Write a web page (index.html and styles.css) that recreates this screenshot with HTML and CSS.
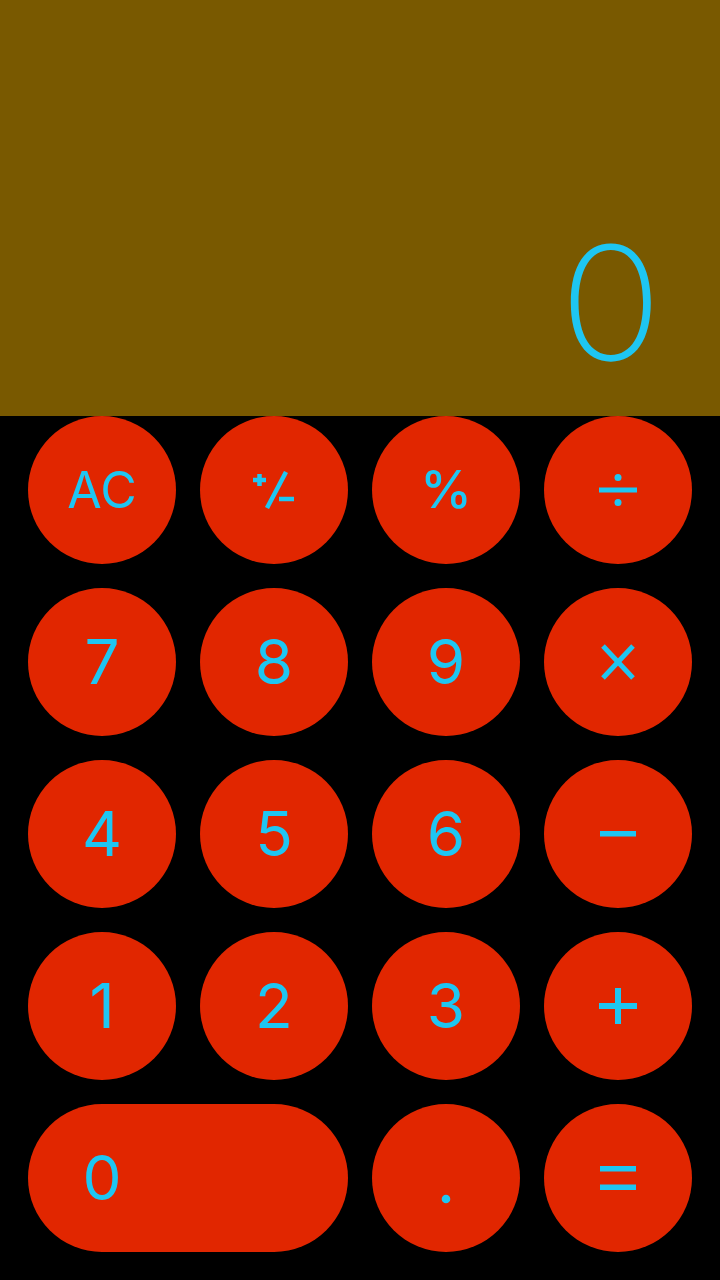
FILE: index.html
```html
<!DOCTYPE html>
<html lang="en">
<head>
<meta charset="utf-8">
<title>Calculator</title>
<link rel="stylesheet" href="styles.css">
</head>
<body>
<div class="calc">
  <div class="display"><span class="value">0</span></div>
  <div class="keypad">
    <button class="key"><span class="txt small">AC</span></button>
    <button class="key" aria-label="plus/minus">
      <svg width="42" height="38" viewBox="0 0 42 38"><g stroke="currentColor" stroke-width="4.5" fill="none" stroke-linecap="butt"><line x1="0" y1="9" x2="13" y2="9"/><line x1="6.5" y1="3" x2="6.5" y2="15"/><line x1="33" y1="1" x2="14" y2="37"/><line x1="26" y1="28" x2="41" y2="28"/></g></svg>
    </button>
    <button class="key"><span class="txt pct">%</span></button>
    <button class="key" aria-label="divide">
      <svg width="38" height="32" viewBox="0 0 38 32"><g fill="currentColor"><rect x="0" y="13.5" width="38" height="5"/><circle cx="19" cy="3.5" r="3.5"/><circle cx="19" cy="28.5" r="3.5"/></g></svg>
    </button>

    <button class="key"><span class="txt">7</span></button>
    <button class="key"><span class="txt">8</span></button>
    <button class="key"><span class="txt">9</span></button>
    <button class="key" aria-label="multiply">
      <svg width="34" height="36" viewBox="0 0 34 36"><g stroke="currentColor" stroke-width="5" stroke-linecap="butt"><line x1="2" y1="2" x2="32" y2="34"/><line x1="32" y1="2" x2="2" y2="34"/></g></svg>
    </button>

    <button class="key"><span class="txt">4</span></button>
    <button class="key"><span class="txt">5</span></button>
    <button class="key"><span class="txt">6</span></button>
    <button class="key" aria-label="minus">
      <svg width="36" height="6" viewBox="0 0 36 6"><rect x="0" y="0" width="36" height="5.5" fill="currentColor"/></svg>
    </button>

    <button class="key"><span class="txt">1</span></button>
    <button class="key"><span class="txt">2</span></button>
    <button class="key"><span class="txt">3</span></button>
    <button class="key" aria-label="plus">
      <svg width="38" height="36" viewBox="0 0 38 36"><g fill="currentColor"><rect x="0" y="15" width="38" height="6"/><rect x="16" y="0" width="6" height="36"/></g></svg>
    </button>

    <button class="key zero"><span class="txt zero-label">0</span></button>
    <button class="key dot" aria-label="decimal point">
      <svg width="10" height="10" viewBox="0 0 10 10"><circle cx="5" cy="5" r="4.3" fill="currentColor"/></svg>
    </button>
    <button class="key" aria-label="equals">
      <svg width="36" height="25" viewBox="0 0 36 25"><g fill="currentColor"><rect x="0" y="0" width="36" height="5.5"/><rect x="0" y="18.5" width="36" height="5.5"/></g></svg>
    </button>
  </div>
</div>
</body>
</html>
```
FILE: styles.css
```css
html, body {
  margin: 0;
  padding: 0;
  background: #000;
}

.calc {
  width: 720px;
  height: 1280px;
  display: flex;
  flex-direction: column;
  font-family: "Inter", "Liberation Sans", sans-serif;
  color: #1ec6f2;
}

.display {
  height: 416px;
  box-sizing: border-box;
  background: #795900;
  display: flex;
  justify-content: flex-end;
  align-items: flex-end;
  padding: 0 58px 34px 0;
}

.value {
  font-size: 158px;
  font-weight: 200;
  line-height: 1;
  display: inline-block;
  transform: scaleX(1.08);
  transform-origin: right center;
}

.keypad {
  display: grid;
  grid-template-columns: repeat(4, 148px);
  grid-auto-rows: 148px;
  gap: 24px;
  padding: 0 28px 28px;
}

.key {
  border: none;
  margin: 0;
  padding: 0;
  border-radius: 74px;
  background: #e12600;
  color: #1ec6f2;
  display: flex;
  align-items: center;
  justify-content: center;
  font-family: inherit;
}

.txt {
  font-size: 62px;
  font-weight: 400;
  line-height: 1;
}

.txt.small {
  font-size: 50px;
}

.txt.pct {
  font-size: 52px;
  font-weight: 500;
}

.zero {
  grid-column: span 2;
  justify-content: flex-start;
}

.zero-label {
  width: 148px;
  text-align: center;
}

.dot svg {
  margin-top: 42px;
}
```
